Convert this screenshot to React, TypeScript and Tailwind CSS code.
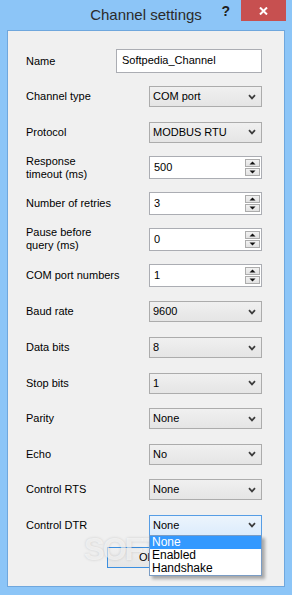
import React from "react";

const Chevron = () => (
  <svg width="8" height="6" viewBox="0 0 8 6" className="shrink-0">
    <path d="M1 1.2 L4 4.4 L7 1.2" fill="none" stroke="#3c3c3c" strokeWidth="1.7" />
  </svg>
);

function Combo({ value, focused = false }: { value: string; focused?: boolean }) {
  return (
    <div
      className={
        focused
          ? "w-[113px] h-[21px] border border-[#569de5] bg-linear-to-b from-[#ecf4fc] to-[#dcecfc] flex items-center justify-between pl-[3px] pr-[5px]"
          : "w-[113px] h-[21px] border border-[#acacac] bg-linear-to-b from-[#f0f0f0] to-[#e5e5e5] flex items-center justify-between pl-[3px] pr-[5px]"
      }
    >
      <span className="text-black">{value}</span>
      <Chevron />
    </div>
  );
}

const SpinBtn = ({ up }: { up?: boolean }) => (
  <div className="w-[15px] h-[8px] border border-[#acacac] bg-linear-to-b from-[#f2f2f2] to-[#e2e2e2] flex items-center justify-center">
    <svg width="7" height="4" viewBox="0 0 7 4">
      <path d={up ? "M0.5 3.5 L3.5 0.5 L6.5 3.5 Z" : "M0.5 0.5 L3.5 3.5 L6.5 0.5 Z"} fill="#111" />
    </svg>
  </div>
);

function Spin({ value }: { value: string }) {
  return (
    <div className="w-[113px] h-[23px] border border-[#abadb3] bg-white flex items-center">
      <span className="flex-1 pl-[4px] text-black">{value}</span>
      <div className="flex flex-col gap-[1px] mr-[1px]">
        <SpinBtn up />
        <SpinBtn />
      </div>
    </div>
  );
}

type Row = { label: string[]; h: string; kind: "combo" | "spin"; value: string; focused?: boolean };

const rows: Row[] = [
  { label: ["Channel type"], h: "h-[35px]", kind: "combo", value: "COM port" },
  { label: ["Protocol"], h: "h-[36px]", kind: "combo", value: "MODBUS RTU" },
  { label: ["Response", "timeout (ms)"], h: "h-[35px]", kind: "spin", value: "500" },
  { label: ["Number of retries"], h: "h-[36px]", kind: "spin", value: "3" },
  { label: ["Pause before", "query (ms)"], h: "h-[36px]", kind: "spin", value: "0" },
  { label: ["COM port numbers"], h: "h-[36px]", kind: "spin", value: "1" },
  { label: ["Baud rate"], h: "h-[37px]", kind: "combo", value: "9600" },
  { label: ["Data bits"], h: "h-[35px]", kind: "combo", value: "8" },
  { label: ["Stop bits"], h: "h-[36px]", kind: "combo", value: "1" },
  { label: ["Parity"], h: "h-[35px]", kind: "combo", value: "None" },
  { label: ["Echo"], h: "h-[36px]", kind: "combo", value: "No" },
  { label: ["Control RTS"], h: "h-[35px]", kind: "combo", value: "None" },
  { label: ["Control DTR"], h: "h-[36px]", kind: "combo", value: "None", focused: true },
];

export default function App() {
  return (
    <div className="relative w-[292px] h-[595px] bg-[#8cc5f7] flex flex-col text-[11px] leading-[13px] font-['Liberation_Sans',Arial,sans-serif] text-black overflow-hidden">
      {/* Title bar */}
      <div className="h-[30px] grid grid-cols-[1fr_auto_1fr] shrink-0">
        <div />
        <div className="pt-[6px] text-[15px] leading-[18px] text-[#2b2b2b]">Channel settings</div>
        <div className="flex justify-end items-start pr-[6px]">
          <span className="mt-[3px] mr-[11px] text-[14px] leading-[16px] font-bold text-[#1e1e1e]">?</span>
          <div className="w-[45px] h-[21px] bg-[#c75050] flex items-center justify-center">
            <svg width="9" height="8" viewBox="0 0 9 8">
              <path d="M1 0.5 L8 7.5 M8 0.5 L1 7.5" stroke="#fff" strokeWidth="2" />
            </svg>
          </div>
        </div>
      </div>

      {/* Client area */}
      <div className="relative mx-[7px] h-[557px] border border-[#6fa7dd] bg-[#f0f0f0] pt-[12px] pl-[18px]">
        <div className="h-[36px] flex items-center">
          <div className="w-[90px]">Name</div>
          <div className="w-[146px] h-[24px] border border-[#abadb3] bg-white flex items-center pl-[5px] pb-[2px]">
            Softpedia_Channel
          </div>
        </div>
        {rows.map((r) => (
          <div key={r.label.join(" ")} className={`${r.h} flex items-center`}>
            <div className="w-[123px]">
              {r.label.map((l) => (
                <div key={l}>{l}</div>
              ))}
            </div>
            {r.kind === "combo" ? <Combo value={r.value} focused={r.focused} /> : <Spin value={r.value} />}
          </div>
        ))}

        <div className="flex justify-center mt-[4px] pr-[18px]">
          <div className="w-[78px] h-[21px] border border-[#3c8fe0] bg-linear-to-b from-[#f0f0f0] to-[#e5e5e5] flex items-center justify-center">
            Ok
          </div>
        </div>

        {/* Open dropdown list */}
        <div className="absolute z-20 left-[141px] top-[504px] w-[113px] border border-[#7a9cc4] bg-white shadow-[3px_3px_3px_rgba(0,0,0,0.3)] text-[12px] leading-[13px]">
          <div className="bg-[#3399ff] text-white pl-[2px]">None</div>
          <div className="pl-[2px]">Enabled</div>
          <div className="pl-[2px]">Handshake</div>
        </div>
      </div>

      {/* Watermark */}
      <div className="absolute z-10 left-[84px] top-[533px] flex items-start pointer-events-none text-white/60 [text-shadow:0_0_3px_rgba(0,0,0,0.15)]">
        <span className="text-[31px] leading-[34px] font-bold tracking-[-2px]">SOFTPEDIA</span>
        <span className="text-[10px] leading-[10px] mt-[4px] ml-[2px]">®</span>
      </div>
    </div>
  );
}
